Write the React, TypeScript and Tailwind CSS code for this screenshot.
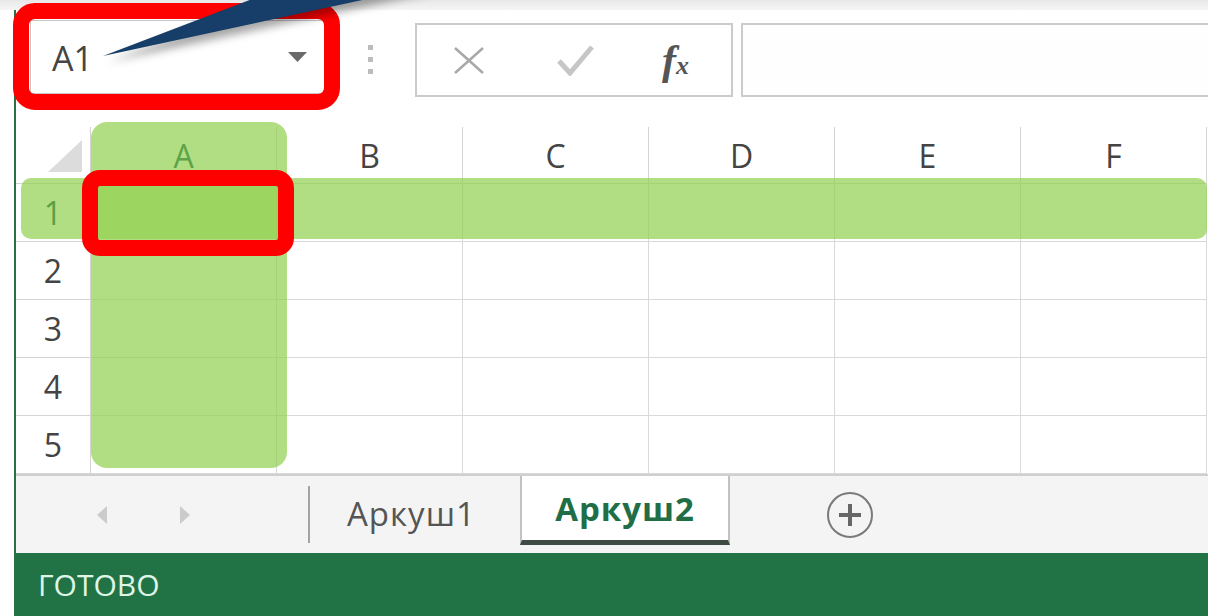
import React from 'react';

const COLS = ['A', 'B', 'C', 'D', 'E', 'F'];
const ROWS = [1, 2, 3, 4, 5];

function CornerCell() {
  return (
    <div className="relative w-[75px] h-[57px] shrink-0 border-r border-b border-[#d4d4d4]">
      <svg className="absolute left-[32px] top-[13px]" width="34" height="32" viewBox="0 0 34 32">
        <polygon points="34,0 34,32 0,32" fill="#dcdcdc" />
      </svg>
    </div>
  );
}

function HeaderRow() {
  return (
    <div className="flex h-[57px]">
      <CornerCell />
      {COLS.map((c) => (
        <div
          key={c}
          className="w-[186px] shrink-0 flex items-center justify-center border-r border-b border-[#d4d4d4] pt-[1px]"
        >
          <span
            className={
              c === 'A'
                ? 'relative z-20 text-[32px] leading-none text-[#5ca447]'
                : 'text-[32px] leading-none text-[#444]'
            }
          >
            {c}
          </span>
        </div>
      ))}
    </div>
  );
}

function GridRow({ n }: { n: number }) {
  return (
    <div className="flex h-[58px]">
      <div className="w-[75px] shrink-0 flex items-center justify-center border-r border-b border-[#d4d4d4]">
        <span
          className={
            n === 1
              ? 'relative z-20 text-[32px] leading-none text-[#5a9f45]'
              : 'text-[32px] leading-none text-[#444]'
          }
        >
          {n}
        </span>
      </div>
      {COLS.map((c) => (
        <div key={c} className="w-[186px] shrink-0 border-r border-b border-[#d9d9d9]" />
      ))}
    </div>
  );
}

function FormulaBar() {
  return (
    <div className="flex items-start h-[117px]">
      {/* name box */}
      <div className="ml-[14px] mt-[10px] w-[295px] h-[74px] border border-[#c6c6c6] flex items-center justify-between pl-[21px] pr-[17px]">
        <span className="text-[34px] leading-none text-[#454545] pt-[2px]">A1</span>
        <svg width="19" height="10" viewBox="0 0 19 10">
          <polygon points="0,0 19,0 9.5,10" fill="#6a6a6a" />
        </svg>
      </div>

      <div className="ml-[43px] mt-[35px] flex flex-col gap-[7px]">
        <span className="w-[5px] h-[5px] bg-[#bdbdbd]" />
        <span className="w-[5px] h-[5px] bg-[#bdbdbd]" />
        <span className="w-[5px] h-[5px] bg-[#bdbdbd]" />
      </div>

      {/* cancel / enter / insert function */}
      <div className="ml-[42px] mt-[13px] w-[318px] h-[74px] border-2 border-[#cbcbcb] flex items-center pl-[36px]">
        <svg width="32" height="27" viewBox="0 0 32 27">
          <path d="M2 1 L30 26 M30 1 L2 26" stroke="#a9a9a9" strokeWidth="2.6" fill="none" />
        </svg>
        <svg className="ml-[72px]" width="37" height="32" viewBox="0 0 37 32">
          <polyline points="2,17 13,29 35,3" stroke="#c6c6c6" strokeWidth="5" fill="none" />
        </svg>
        <span className="ml-[68px] font-['Liberation_Serif',serif] italic font-bold text-[#555] leading-none">
          <span className="text-[42px]">f</span>
          <span className="text-[26px]">x</span>
        </span>
      </div>

      <div className="ml-[8px] mt-[13px] flex-1 h-[74px] border-y-2 border-l-2 border-[#cbcbcb] bg-[#fefefe]" />
    </div>
  );
}

function SheetTabs() {
  return (
    <div className="flex items-center h-[79px] border-t-2 border-[#cfcfcf] bg-[#f4f4f4]">
      <svg className="ml-[81px]" width="10" height="18" viewBox="0 0 10 18">
        <polygon points="10,0 10,18 0,9" fill="#cbcbcb" />
      </svg>
      <svg className="ml-[73px]" width="10" height="18" viewBox="0 0 10 18">
        <polygon points="0,0 0,18 10,9" fill="#cbcbcb" />
      </svg>
      <div className="ml-[118px] w-[2px] h-[57px] bg-[#a3a3a3]" />
      <div className="ml-[37px] w-[173px] shrink-0">
        <span className="text-[33px] leading-none tracking-[1px] text-[#555]">Аркуш1</span>
      </div>
      <div className="self-start w-[210px] shrink-0 h-[69px] bg-white border-x-2 border-[#c2c2c2] border-b-[5px] border-b-[#3e4b43] flex items-center justify-center">
        <span className="text-[33px] leading-none tracking-[1px] font-bold text-[#1f6e46]">Аркуш2</span>
      </div>
      <div className="ml-[97px] w-[46px] h-[46px] rounded-full border-2 border-[#7a7a7a] flex items-center justify-center">
        <svg width="24" height="24" viewBox="0 0 24 24">
          <path d="M12 1 V23 M1 12 H23" stroke="#676767" strokeWidth="4" />
        </svg>
      </div>
    </div>
  );
}

export default function App() {
  return (
    <div className="relative w-[1208px] h-[616px] overflow-hidden bg-white font-['Open_Sans','Noto_Sans',sans-serif]">
      <div className="h-[10px] bg-gradient-to-b from-[#e8e8e8] to-[#f5f5f5]" />

      <div className="flex h-[606px]">
        <div className="w-[14px] shrink-0 bg-white" />
        <div className="flex flex-1 flex-col border-l-2 border-[#2b6d45]">
          <FormulaBar />
          <div className="flex flex-col h-[347px] overflow-hidden">
            <HeaderRow />
            {ROWS.map((n) => (
              <GridRow key={n} n={n} />
            ))}
          </div>
          <SheetTabs />
          <div className="flex items-center h-[63px] bg-[#217346] pl-[22px]">
            <span className="text-[30px] leading-none text-[#dff5e6]">ГОТОВО</span>
          </div>
        </div>
      </div>

      {/* selection highlights */}
      <div className="absolute left-[91px] top-[122px] w-[196px] h-[346px] rounded-[16px] bg-[rgba(146,208,80,0.71)] z-10" />
      <div className="absolute left-[21px] top-[178px] w-[1186px] h-[61px] rounded-[10px] bg-[rgba(146,208,80,0.71)] z-10" />

      {/* callout frames */}
      <div className="absolute left-[13px] top-[3px] w-[327px] h-[107px] rounded-[22px] border-[16px] border-[#ff0000] z-30" />
      <div className="absolute left-[82px] top-[170px] w-[212px] h-[86px] rounded-[18px] border-[16px] border-[#ff0000] z-30" />

      {/* pointer */}
      <svg
        className="absolute left-0 top-0 z-40 overflow-visible drop-shadow-[5px_6px_4px_rgba(0,0,0,0.35)]"
        width="460"
        height="60"
        viewBox="0 0 460 60"
      >
        <polygon points="103,56 302,-20 455,-20" fill="#163e68" />
      </svg>
    </div>
  );
}
